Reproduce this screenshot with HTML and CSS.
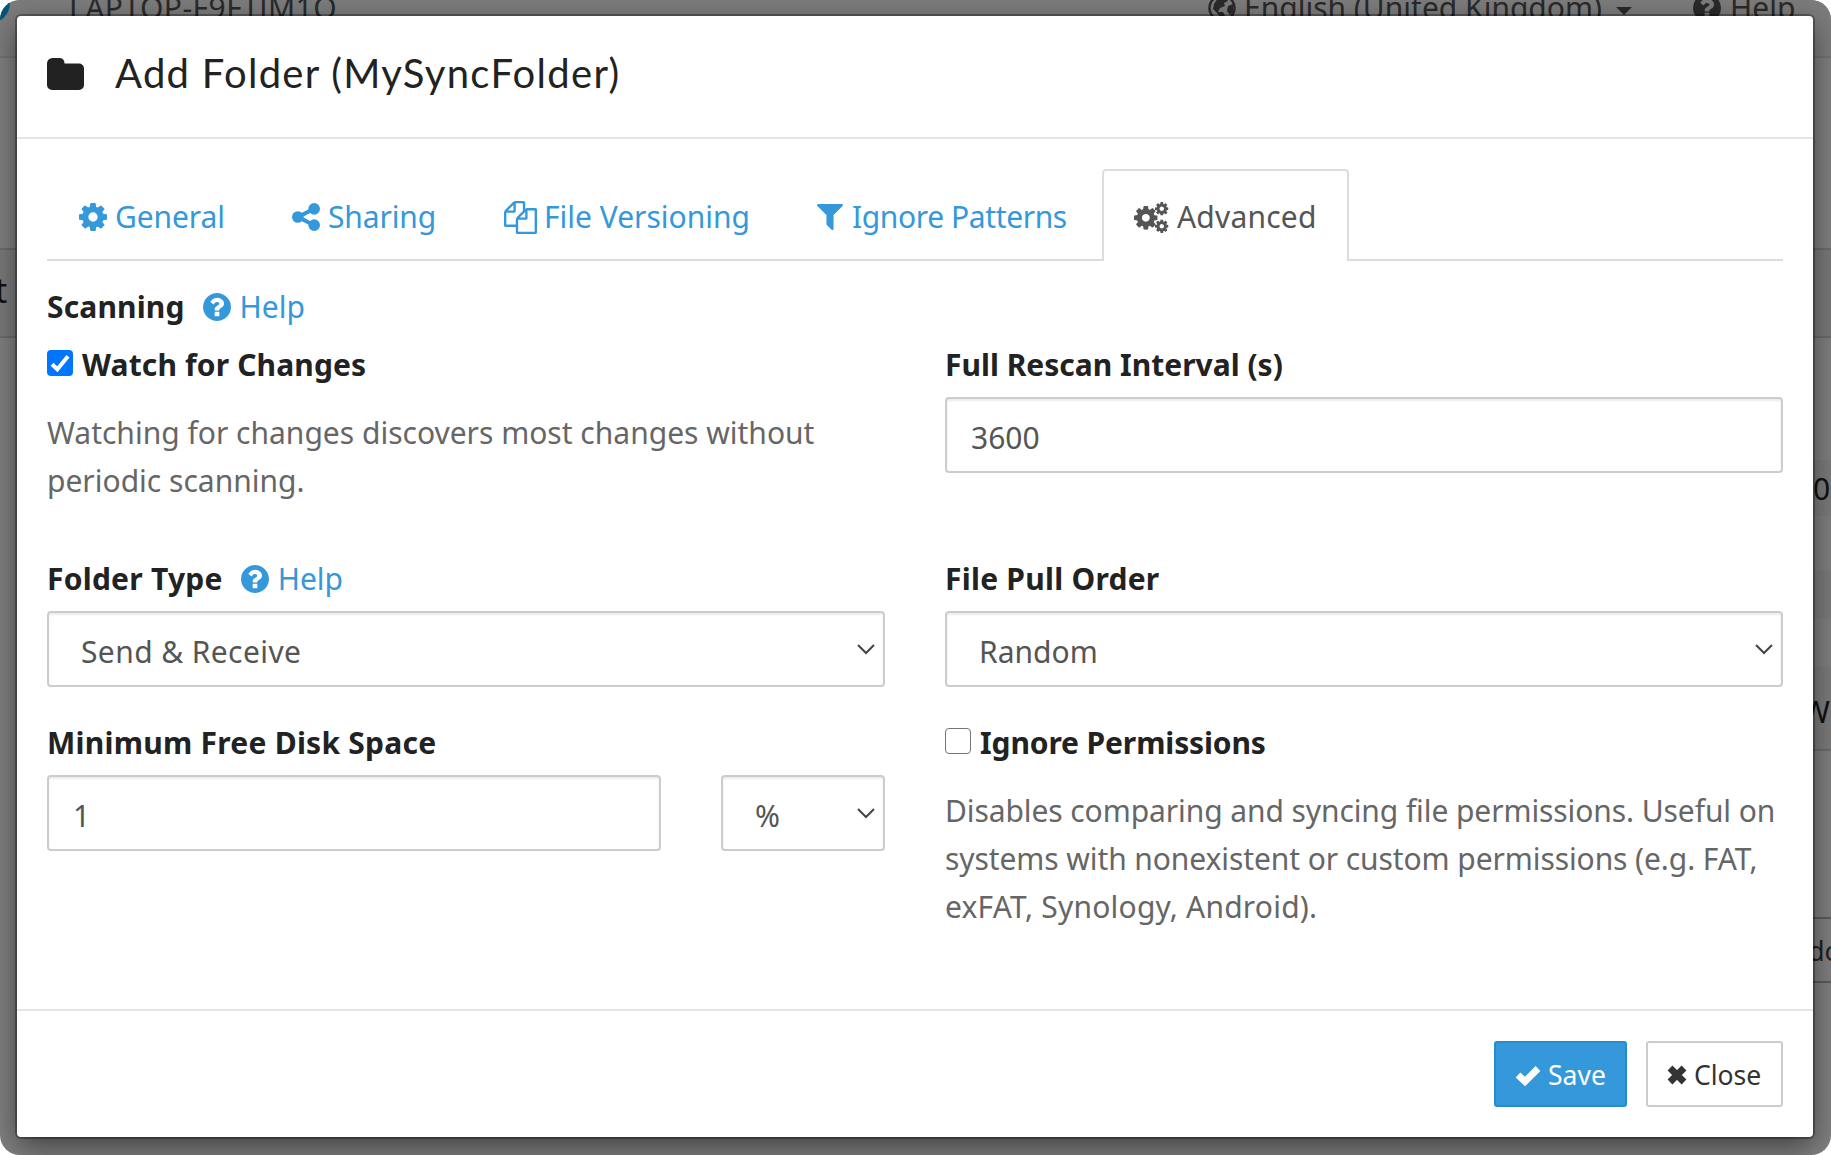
FILE: index.html
```html
<!DOCTYPE html>
<html lang="en-GB">
<head>
<meta charset="utf-8">
<title>Add Folder</title>
<link rel="stylesheet" href="styles.css">
</head>
<body>
<svg class="defs" aria-hidden="true">
  <symbol id="cog" viewBox="0 0 1536 1536"><path d="M1024 768q0-106-75-181t-181-75-181 75-75 181 75 181 181 75 181-75 75-181zm512-109v222q0 12-8 23t-20 13l-185 28q-19 54-39 91 35 50 107 138 10 12 10 25t-9 23q-27 37-99 108t-94 71q-12 0-26-9l-138-108q-44 23-91 38-16 136-29 186-7 28-36 28h-222q-14 0-24.500-8.500t-11.500-21.500l-28-184q-49-16-90-37l-141 107q-10 9-25 9-14 0-25-11-126-114-165-168-7-10-7-23 0-12 8-23 15-21 51-66.500t54-70.500q-27-50-41-99l-183-27q-13-2-21-12.500t-8-23.500v-222q0-12 8-23t19-13l186-28q14-46 39-92-40-57-107-138-10-12-10-24 0-10 9-23 26-36 98.500-107.500t94.500-71.500q13 0 26 10l138 107q44-23 91-38 16-136 29-186 7-28 36-28h222q14 0 24.500 8.500t11.500 21.500l28 184q49 16 90 37l142-107q9-9 24-9 13 0 25 10 129 119 165 170 7 8 7 22 0 12-8 23-15 21-51 66.500t-54 70.500q26 50 41 98l183 28q13 2 21 12.500t8 23.500z"/></symbol>
  <symbol id="question" viewBox="0 0 1536 1536"><path d="M896 1248v-192q0-14-9-23t-23-9h-192q-14 0-23 9t-9 23v192q0 14 9 23t23 9h192q14 0 23-9t9-23zm256-672q0-88-55.500-163t-138.500-116-170-41q-243 0-371 213-15 24 8 42l132 100q7 6 19 6 16 0 25-12 53-68 86-92 34-24 86-24 48 0 85.500 26t37.500 59q0 38-20 61t-68 45q-63 28-115.500 86.500t-52.500 125.500v36q0 14 9 23t23 9h192q14 0 23-9t9-23q0-19 21.500-49.500t54.500-49.500q32-18 49-28.500t46-35 44.500-48 28-60.500 12.500-81zm384 192q0 209-103 385.500t-279.500 279.500-385.500 103-385.500-103-279.500-279.500-103-385.500 103-385.500 279.500-279.500 385.500-103 385.500 103 279.500 279.500 103 385.500z"/></symbol>
</svg>
<div class="screen">
  <div class="page" aria-hidden="true">
    <div class="navbar">
      <svg class="brand" viewBox="0 0 40 40"><circle cx="20" cy="20" r="20"/><path d="M2 30L34 19"/></svg>
      <span class="device">LAPTOP-F9FTJM1O</span>
      <span class="lang"><svg class="globe" viewBox="0 0 28 28"><circle cx="14" cy="14" r="12.500"/><path d="M10 4l7-1 3 4-4 2 1 3-5 2-2 4 5 0 2 4-3 5-2-4-3-4-4-4 1-5zM20 12l5-2 0 8-3 3-3-4z"/></svg><span class="lang-text">English (United Kingdom)</span><i class="caret"></i></span>
      <span class="nav-help"><svg class="q"><use href="#question"/></svg><span class="nav-help-text">Help</span></span>
    </div>
    <div class="bits">
      <div class="panel-left">t</div>
      <div class="panel-right"></div>
      <div class="stripe stripe-a">0</div>
      <div class="stripe stripe-b"></div>
      <div class="stripe stripe-c">W</div>
      <div class="outline-btn">do</div>
    </div>
  </div>
  <div class="modal">
    <header class="head">
      <svg class="folder" viewBox="0 0 37 32"><path d="M5.500 0H13a5 5 0 0 1 4.500 5.500H32a5 5 0 0 1 5 5V27a5 5 0 0 1-5 5H5a5 5 0 0 1-5-5V5.500A5.500 5.500 0 0 1 5.500 0Z"/></svg>
      <h1 class="title">Add Folder (MySyncFolder)</h1>
    </header>
    <main class="body">
      <nav class="tabs">
        <a class="tab t-general"><svg class="i28"><use href="#cog"/></svg><span>General</span></a>
        <a class="tab t-sharing"><svg class="i28" viewBox="0 0 1536 1536"><path d="M1216 896q133 0 226.500 93.500t93.500 226.500-93.500 226.500-226.500 93.500-226.500-93.500-93.500-226.500q0-12 2-34l-360-180q-92 86-218 86-133 0-226.500-93.500t-93.500-226.500 93.500-226.500 226.500-93.500q126 0 218 86l360-180q-2-22-2-34 0-133 93.500-226.500t226.500-93.500 226.500 93.500 93.500 226.500-93.500 226.500-226.500 93.500q-126 0-218-86l-360 180q2 22 2 34t-2 34l360 180q92-86 218-86z"/></svg><span>Sharing</span></a>
        <a class="tab t-versions"><svg class="i32" viewBox="0 0 1792 1792"><path d="M1696 384q40 0 68 28t28 68v1216q0 40-28 68t-68 28h-960q-40 0-68-28t-28-68v-288h-544q-40 0-68-28t-28-68v-672q0-40 20-88t48-76l408-408q28-28 76-48t88-20h416q40 0 68 28t28 68v328q68-40 128-40h416zm-544 213l-299 299h299v-299zm-640-384l-299 299h299v-299zm196 647l316-316v-416h-384v416q0 40-28 68t-68 28h-416v640h512v-256q0-40 20-88t48-76zm956 804v-1152h-384v416q0 40-28 68t-68 28h-416v640h896z"/></svg><span>File Versioning</span></a>
        <a class="tab t-ignore"><svg class="i26" viewBox="0 0 1408 1408"><path d="M1403 39q17 41-14 70l-493 493v742q0 42-39 59-13 5-25 5-27 0-45-19l-256-256q-19-19-19-45v-486l-493-493q-31-29-14-70 17-39 59-39h1280q42 0 59 39z"/></svg><span>Ignore Patterns</span></a>
        <a class="tab t-advanced active"><svg class="i35" viewBox="0 0 35 31"><g transform="translate(0 4) scale(.0154)"><use href="#cog" width="1536" height="1536"/></g><g transform="translate(21 0) scale(.0088)"><use href="#cog" width="1536" height="1536"/></g><g transform="translate(21 17.500) scale(.0088)"><use href="#cog" width="1536" height="1536"/></g></svg><span>Advanced</span></a>
      </nav>
      <div class="section"><b class="w-scanning">Scanning</b><a class="help"><svg class="q"><use href="#question"/></svg><span class="w-help">Help</span></a></div>
      <div class="grid">
        <section class="watch">
          <label class="check"><i class="box checked"><svg viewBox="0 0 26 26"><path d="M5 14.200L10.300 19.300L21 6.300"/></svg></i><b class="w-watch">Watch for Changes</b></label>
          <p class="note"><span class="n1">Watching for changes discovers most changes without</span><br><span class="n2">periodic scanning.</span></p>
        </section>
        <section>
          <div class="label"><b class="w-rescan">Full Rescan Interval (s)</b></div>
          <div class="field"><span class="w-3600">3600</span></div>
        </section>
        <section class="type">
          <div class="label"><b class="w-type">Folder Type</b><a class="help"><svg class="q"><use href="#question"/></svg><span class="w-help">Help</span></a></div>
          <div class="field select"><span class="w-send">Send &amp; Receive</span><svg class="chev" viewBox="0 0 18 11"><path d="M1 1L9 9L17 1"/></svg></div>
        </section>
        <section class="type">
          <div class="label"><b class="w-pull">File Pull Order</b></div>
          <div class="field select"><span class="w-random">Random</span><svg class="chev" viewBox="0 0 18 11"><path d="M1 1L9 9L17 1"/></svg></div>
        </section>
        <section class="disk">
          <div class="label"><b class="w-disk">Minimum Free Disk Space</b></div>
          <div class="pair">
            <div class="field"><span>1</span></div>
            <div class="field select"><span class="w-pct">%</span><svg class="chev" viewBox="0 0 18 11"><path d="M1 1L9 9L17 1"/></svg></div>
          </div>
        </section>
        <section class="perms">
          <label class="check"><i class="box"></i><b class="w-perms">Ignore Permissions</b></label>
          <p class="note"><span class="n3">Disables comparing and syncing file permissions. Useful on</span><br><span class="n4">systems with nonexistent or custom permissions (e.g. FAT,</span><br><span class="n5">exFAT, Synology, Android).</span></p>
        </section>
      </div>
    </main>
    <footer class="foot">
      <button class="btn save"><svg viewBox="0 0 26 20"><path d="M3 10L10 16.500L23 3.500"/></svg><span>Save</span></button>
      <button class="btn close"><svg viewBox="0 0 20 20"><path d="M3 3L17 17M17 3L3 17"/></svg><span>Close</span></button>
    </footer>
  </div>
</div>
</body>
</html>
```
FILE: styles.css
```css
* { box-sizing: border-box; }
html, body { margin: 0; background: #fff; }
body { font: 30px/48px "Noto Sans", "Open Sans", sans-serif; color: #222; }
svg { display: block; fill: currentColor; flex: none; overflow: visible; }
.defs { position: absolute; width: 0; height: 0; }
b { font-weight: 700; }
span, b { white-space: nowrap; }

.screen { position: relative; width: 1831px; height: 1155px; overflow: hidden; border-radius: 20px; background: #808080; }

.navbar { position: relative; height: 58px; background: #7c7c7c; border-bottom: 2px solid #737373; color: #2a2a2a; }
.navbar > *, .bits > * { position: absolute; }
.brand { left: -30px; top: -17px; width: 40px; height: 40px; fill: #06557c; }
.brand path { stroke: #9bb; stroke-width: 3; }
.device { left: 69px; top: -16px; letter-spacing: 0.450px; }
.lang, .nav-help { display: flex; align-items: center; top: -16px; height: 48px; }
.lang { left: 1208px; gap: 8px; }
.globe { width: 28px; height: 28px; margin-top: -1px; }
.nav-help .q { margin-top: -1px; }
.globe circle { fill: none; stroke: #2a2a2a; stroke-width: 2.500; }
.caret { border: 8px solid transparent; border-top-color: #2a2a2a; border-bottom: 0; margin: 6px 0 0 6px; }
.nav-help { left: 1693px; gap: 9px; }
.panel-left, .panel-right { top: 248px; height: 90px; background: #7a7a7a; border: solid #6c6c6c; border-width: 2px 0; color: #111; }
.panel-left { left: 0; width: 16px; line-height: 81px; font-size: 34px; text-indent: -5px; }
.panel-right { left: 1813px; width: 18px; }
.stripe { left: 1813px; width: 18px; height: 56px; color: #111; background: #7c7c7c; }
.stripe-a { top: 460px; line-height: 58px; }
.stripe-b { top: 570px; height: 49px; }
.stripe-c { top: 667px; height: 84px; line-height: 90px; border-bottom: 2px solid #6c6c6c; text-indent: -11px; }
.outline-btn { left: 1813px; top: 917px; width: 18px; height: 66px; line-height: 63px; font-size: 27px; text-indent: -5px; border: solid #5d5d5d; border-width: 2px 0; }

.modal { position: absolute; left: 17px; top: 16px; width: 1796px; height: 1121px; display: flex; flex-direction: column; background: #fff; border-radius: 4px; box-shadow: 0 0 0 2px rgba(0,0,0,.3), 0 10px 30px rgba(0,0,0,.5); }
.head { height: 123px; display: flex; align-items: center; gap: 31px; padding: 0 30px 2px; border-bottom: 2px solid #e5e5e5; }
.folder { width: 37px; height: 32px; margin-bottom: 4px; }
.title { margin: 0 0 5px; font: 400 40px/60px Lato, sans-serif; letter-spacing: 1.280px; }
.body { flex: 1; padding: 30px 30px 0; }

.tabs { display: flex; height: 92px; border-bottom: 2px solid #ddd; color: #3498db; }
.tab { display: flex; align-items: center; gap: 8px; height: 92px; padding: 2px 0 0 30px; border: 2px solid transparent; border-bottom: 0; }
.t-general { width: 213px; letter-spacing: -0.100px; }
.t-sharing { width: 212px; letter-spacing: -0.120px; }
.t-versions { width: 313px; gap: 7px; }
.t-ignore { width: 317px; gap: 9px; letter-spacing: -0.390px; }
.t-advanced { width: 247px; letter-spacing: 0.200px; }
.active { color: #555; background: #fff; border-color: #ddd; border-radius: 4px 4px 0 0; }
.i28, .q { width: 28px; height: 28px; }
.i32 { width: 33px; height: 33px; }
.i26 { width: 26px; height: 26px; }
.i35 { width: 35px; height: 31px; }

.section { display: flex; align-items: center; height: 48px; margin-top: 22px; gap: 18px; }
.help { display: flex; align-items: center; gap: 9px; color: #3498db; }
.help .q { margin-top: -1px; }
.grid { display: grid; grid-template-columns: 838px 838px; column-gap: 60px; grid-template-rows: 214px 164px auto; margin-top: 10px; }
.label { display: flex; align-items: center; height: 48px; gap: 18px; }
.check { display: flex; align-items: center; height: 48px; gap: 9px; }
.box { width: 26px; height: 26px; border: 1.500px solid #767676; border-radius: 4px; margin-top: -5px; }
.checked { border: 0; background: #0075ff; }
.checked svg { fill: none; stroke: #fff; stroke-width: 4; }
.note { margin: 20px 0 0; color: #666; }
.field { display: flex; align-items: center; justify-content: space-between; height: 76px; margin-top: 8px; padding: 6px 8px 0 24px; border: 2px solid #ccc; border-radius: 4px; box-shadow: inset 0 2px 2px rgba(0,0,0,.075); color: #555; }
.select { padding-left: 32px; }
.chev { width: 18px; height: 11px; margin-bottom: 6px; fill: none; stroke: #444; stroke-width: 2; }
.pair { display: grid; grid-template-columns: 614px 164px; gap: 60px; }

/* per-string tracking */
.w-scanning, .w-watch { letter-spacing: 0.140px; }
.w-type { letter-spacing: 0.250px; }
.w-pull, .w-disk { letter-spacing: 0.250px; }
.w-perms { letter-spacing: -0.120px; }
.w-send { letter-spacing: 0.400px; }
.n3, .n4 { letter-spacing: -0.090px; }
.n5 { letter-spacing: 0.200px; }

.foot { height: 128px; display: flex; justify-content: flex-end; gap: 19px; padding: 30px; border-top: 2px solid #e5e5e5; }
.btn { display: flex; align-items: center; gap: 7px; height: 66px; padding: 2px 0 0 19px; border: 2px solid #ccc; border-radius: 3px; background: #fff; color: #333; font: 26.500px/40px "Noto Sans", sans-serif; }
.btn svg { fill: none; stroke: currentColor; stroke-width: 6.800; height: 20px; }
.save { width: 133px; background: #3498db; border-color: #258cd1; color: #fff; }
.save svg { width: 26px; }
.close { width: 137px; }
.close svg { width: 20px; }
```
